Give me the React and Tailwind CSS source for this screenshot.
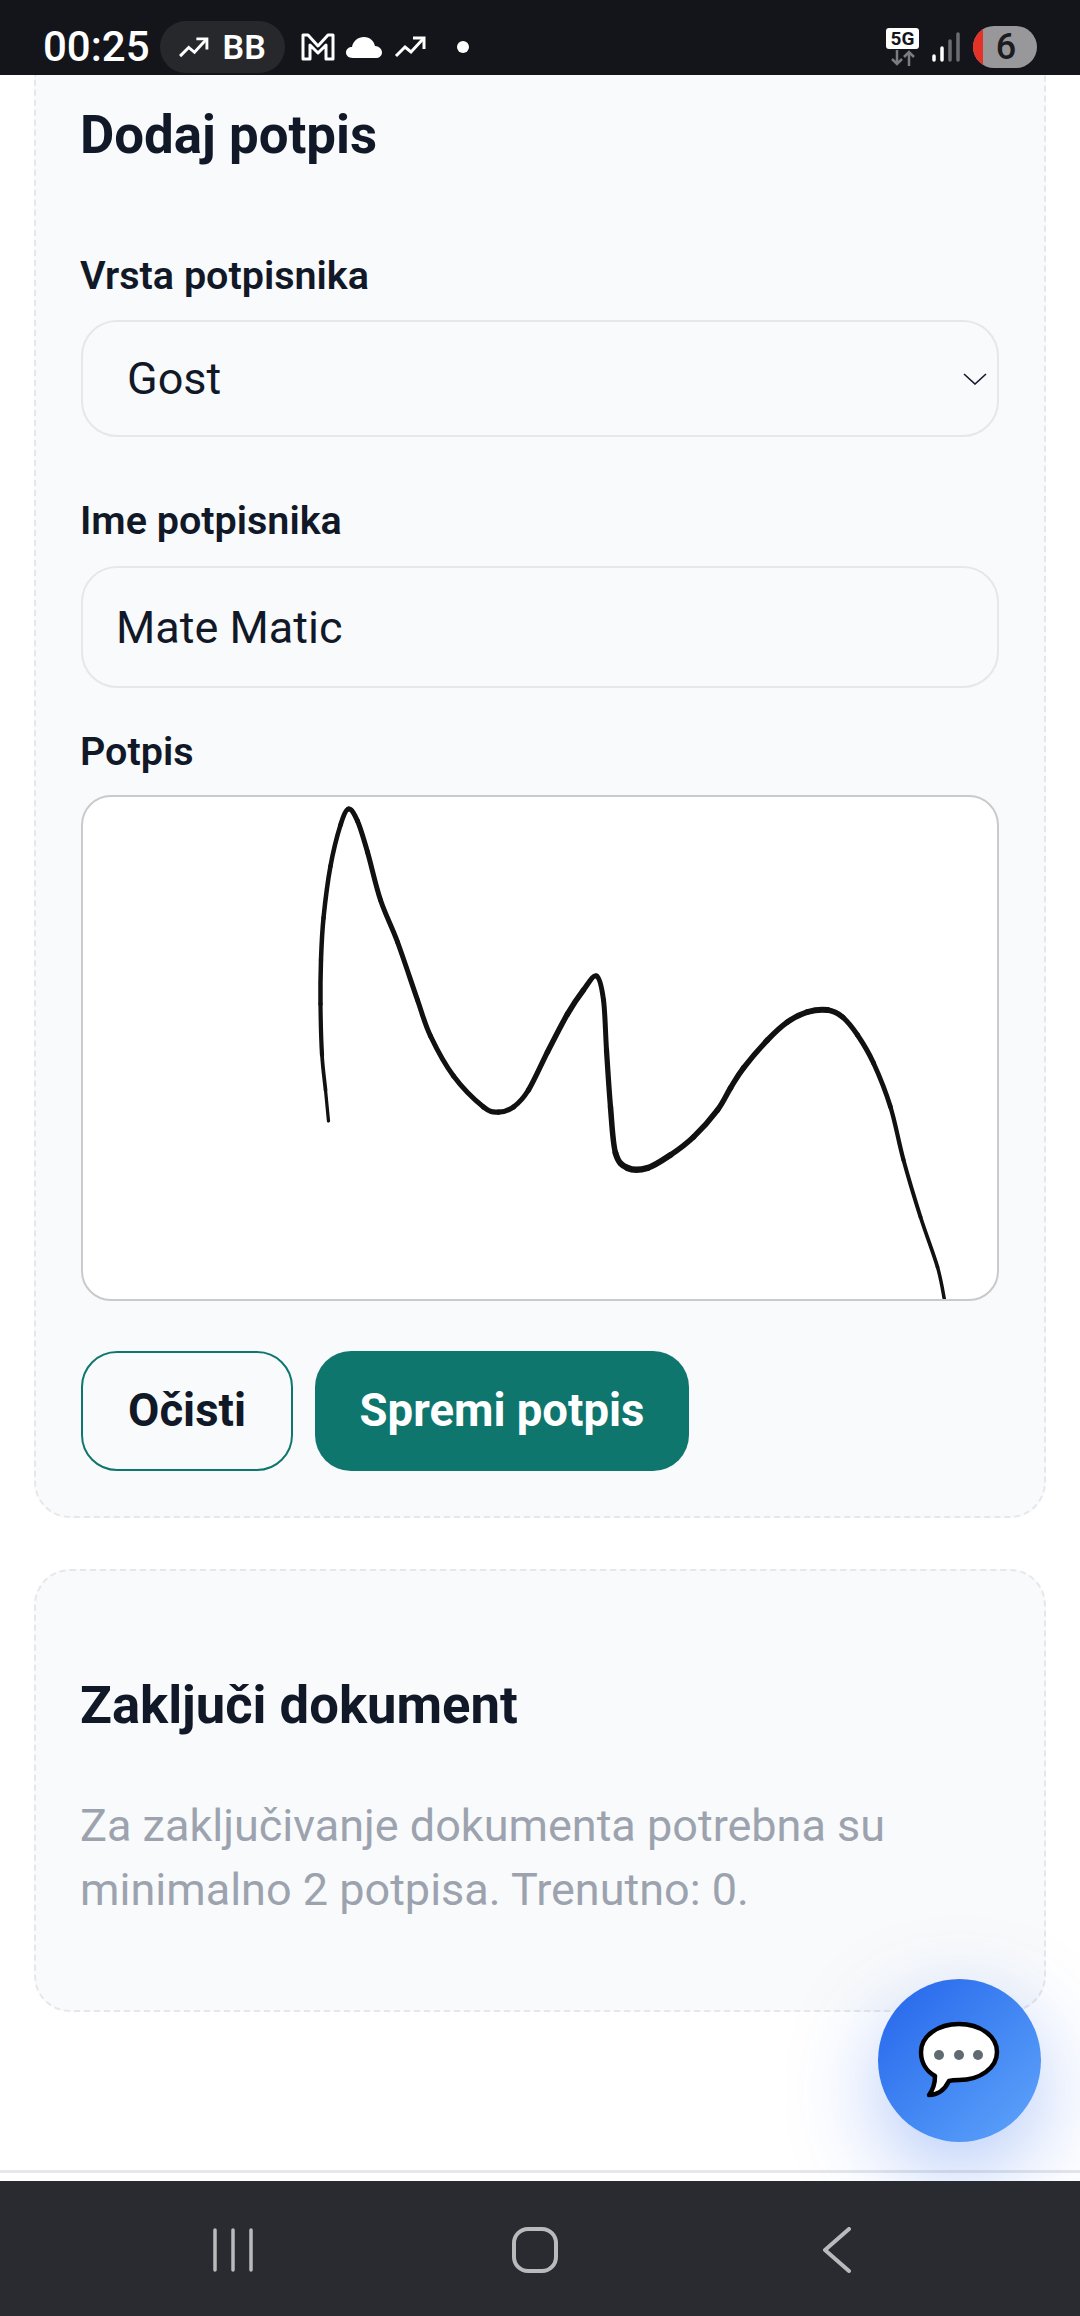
// Signature trace in page coordinates: x, y, stroke width
const SIGNATURE = [
  [328, 1121, 3], [325, 1090, 3.5], [321.5, 1055, 4], [320, 1004, 4.5], [320.5, 960, 4.5], [323, 918, 4.5],
  [330, 866, 4.5], [340, 825, 4.5], [348, 809, 5], [357, 821, 5], [367, 852, 5], [380, 900, 5],
  [397, 942, 5], [417, 1000, 5], [430, 1036, 5], [453, 1076, 5], [483, 1107, 5], [498, 1112, 5.5],
  [513, 1107, 5], [528, 1090, 5], [547, 1052, 5.5], [567, 1014, 5.5], [583, 990, 5.5], [596, 976, 5],
  [603, 1000, 5], [606, 1050, 5], [610, 1107, 5.5], [615, 1153, 5.5], [627, 1168, 6.5], [647, 1168, 6.5],
  [670, 1155, 5.5], [693, 1137, 5.5], [717, 1110, 5.5], [730, 1088, 5.5], [743, 1068, 5.5], [767, 1040, 5.5],
  [787, 1022, 5.5], [807, 1012, 6], [827, 1010, 6], [842, 1017, 5], [857, 1035, 5], [873, 1063, 5],
  [890, 1107, 4.5], [903, 1160, 4], [920, 1217, 4], [937, 1267, 3.5], [944, 1300, 3.5],
];

/**
 * Catmull-Rom segments of the trace, one path per segment so the pen width can vary.
 */
function signatureSegments() {
  return SIGNATURE.slice(0, -1).map((p1, i) => {
    const p0 = SIGNATURE[i - 1] || p1;
    const p2 = SIGNATURE[i + 1];
    const p3 = SIGNATURE[i + 2] || p2;
    const c1 = [p1[0] + (p2[0] - p0[0]) / 6, p1[1] + (p2[1] - p0[1]) / 6];
    const c2 = [p2[0] - (p3[0] - p1[0]) / 6, p2[1] - (p3[1] - p1[1]) / 6];
    return {
      d: `M${p1[0]} ${p1[1]}C${c1[0]} ${c1[1]} ${c2[0]} ${c2[1]} ${p2[0]} ${p2[1]}`,
      width: (p1[2] + p2[2]) / 2,
    };
  });
}

function TrendIcon({ className }) {
  return (
    <svg viewBox="0 0 32 24" className={className} fill="none" stroke="currentColor" strokeWidth="3">
      <path d="M2 21 L11 12 L17 17 L29 4" strokeLinejoin="miter" />
      <path d="M19 3 H30 V14" />
    </svg>
  );
}

function StatusBar() {
  return (
    <div className="h-[75px] shrink-0 bg-[#14151a] flex items-center pl-[43px] pt-[19px] text-white">
      <span className="text-[42px] leading-none font-medium">00:25</span>
      <div className="ml-[10px] h-[52px] w-[125px] rounded-full bg-[#27282c] flex items-center pl-[18px] gap-[14px]">
        <TrendIcon className="w-[31px] h-[23px]" />
        <span className="text-[34px] leading-none font-semibold">BB</span>
      </div>
      <svg viewBox="0 0 34 28" className="ml-[16px] w-[34px] h-[28px]" fill="none" stroke="currentColor" strokeWidth="3" strokeLinejoin="round">
        <path d="M2 2 H7 L17 13 L27 2 H32 V26 H25 V12 L17 20 L9 12 V26 H2 Z" />
      </svg>
      <svg viewBox="0 0 36 22" className="ml-[11px] w-[36px] h-[22px]" fill="currentColor">
        <path d="M7 22 C2 22 0 19 0 16.5 C0 13 3 11 6 11 C7 5 12 1 18 1 C24 1 28 5 29 10 C33 10 36 13 36 16.5 C36 20 33 22 30 22 Z" />
      </svg>
      <TrendIcon className="ml-[12px] w-[32px] h-[24px]" />
      <span className="ml-[31px] h-[12px] w-[12px] rounded-full bg-white" />
      <div className="ml-auto mr-[43px] flex items-center">
        <div className="flex flex-col items-center w-[33px]">
          <span className="w-[33px] h-[21px] rounded-[3px] bg-white text-[#14151a] text-[19px] leading-[21px] font-bold text-center">5G</span>
          <svg viewBox="0 0 26 16" className="w-[26px] h-[16px] mt-[1px]" fill="none" stroke="#7b7c80" strokeWidth="2.5">
            <path d="M7 0 V14 M2 9 L7 14 L12 9 M19 16 V2 M14 7 L19 2 L24 7" />
          </svg>
        </div>
        <svg viewBox="0 0 28 30" className="ml-[13px] w-[28px] h-[30px]" fill="none" strokeWidth="3.5" strokeLinecap="round">
          <path d="M2 28 V24" stroke="#ffffff" />
          <path d="M10 28 V16" stroke="#ffffff" />
          <path d="M18 28 V9" stroke="#6b6c70" />
          <path d="M26 28 V2" stroke="#6b6c70" />
        </svg>
        <div className="relative ml-[13px] h-[42px] w-[64px] rounded-full bg-[#98989b] overflow-hidden flex items-center justify-center">
          <span className="absolute left-0 inset-y-0 w-[10px] bg-[#e53229]" />
          <span className="pl-[2px] text-[36px] leading-none font-medium text-[#1b1c20]">6</span>
        </div>
      </div>
    </div>
  );
}

function FieldLabel({ children }) {
  return <div className="h-[54px] -ml-[1px] text-[39.5px] leading-[56px] font-semibold text-[#111827]">{children}</div>;
}

function AddSignatureCard() {
  return (
    <section className="mx-[34px] border-2 border-t-0 border-dashed border-[#e5e7eb] rounded-b-[36px] bg-[#f9fafb] px-[45px] pt-[24px] pb-[45px]">
      <h2 className="-ml-[1px] text-[52.8px] leading-[72px] font-bold text-[#111827]">Dodaj potpis</h2>

      <div className="mt-[77px]">
        <FieldLabel>Vrsta potpisnika</FieldLabel>
        <div className="relative mt-[18px] h-[117px] rounded-[36px] border-2 border-[#e5e7eb] flex items-center pl-[44px] text-[45px] text-[#111827]">
          Gost
          <svg viewBox="0 0 24 12" className="absolute right-[10px] top-1/2 -translate-y-1/2 w-[24px] h-[12px]" fill="none" stroke="#111827" strokeWidth="1.6">
            <path d="M1 1 L12 11 L23 1" />
          </svg>
        </div>
      </div>

      <div className="mt-[56px]">
        <FieldLabel>Ime potpisnika</FieldLabel>
        <div className="mt-[19px] h-[122px] rounded-[36px] border-2 border-[#e5e7eb] flex items-center pl-[33px] pt-[2px] text-[45px] text-[#111827]">
          Mate Matic
        </div>
      </div>

      <div className="mt-[36px]">
        <FieldLabel>Potpis</FieldLabel>
        <div className="mt-[17px] h-[506px] rounded-[30px] border-2 border-[#c9cacd] bg-white overflow-hidden">
          <svg viewBox="83 797 913 502" className="block w-full h-full" fill="none" stroke="#111111" strokeLinecap="round">
            {signatureSegments().map((segment, i) => (
              <path key={i} d={segment.d} strokeWidth={segment.width} />
            ))}
          </svg>
        </div>
      </div>

      <div className="mt-[50px] flex gap-[22px]">
        <button type="button" className="h-[120px] w-[212px] rounded-[36px] border-2 border-[#0f766e] text-[45.5px] font-bold text-[#111827]">
          Očisti
        </button>
        <button type="button" className="h-[120px] w-[374px] rounded-[36px] bg-[#0f766e] text-[45.5px] font-bold text-white">
          Spremi potpis
        </button>
      </div>
    </section>
  );
}

function FinishCard() {
  return (
    <section className="mx-[34px] mt-[51px] h-[443px] border-2 border-dashed border-[#e5e7eb] rounded-[36px] bg-[#f9fafb] px-[45px] pt-[98px]">
      <h2 className="-ml-[1px] text-[52.6px] leading-[72px] font-bold text-[#111827]">Zaključi dokument</h2>
      <p className="-ml-[1px] mt-[53px] text-[45px] leading-[64px] text-[#9ca3af]">
        Za zaključivanje dokumenta potrebna su minimalno 2 potpisa. Trenutno: 0.
      </p>
    </section>
  );
}

function ChatButton() {
  return (
    <button
      type="button"
      aria-label="Chat"
      className="absolute right-[39px] bottom-[174px] h-[163px] w-[163px] rounded-full bg-gradient-to-br from-[#2563eb] to-[#60a5fa] shadow-[0_30px_90px_rgba(37,99,235,0.35)] flex items-center justify-center"
    >
      <svg viewBox="0 0 82 77" className="w-[82px] h-[77px] -mt-[2px] -ml-[2px]">
        <path
          d="M41 3 C62 3 79 15 79 31 C79 47 62 59 41 59 C37 59 34 59 31 60 C27 68 20 74 11 74 C14 70 17 64 17 55 C8 50 3 41 3 31 C3 15 20 3 41 3 Z"
          fill="#ffffff"
          stroke="#000000"
          strokeWidth="4.5"
          strokeLinejoin="round"
        />
        <circle cx="21" cy="34" r="5" fill="#5f6b70" />
        <circle cx="41" cy="34" r="5" fill="#5f6b70" />
        <circle cx="60" cy="34" r="5" fill="#5f6b70" />
      </svg>
    </button>
  );
}

function NavBar() {
  return (
    <div className="relative z-10 h-[135px] shrink-0 bg-[#2a2b30] text-[#b9babc] grid grid-cols-[302px_302px_302px] justify-center items-center pr-[10px] pt-[3px]">
      <svg viewBox="0 0 40 44" className="justify-self-center w-[40px] h-[44px]" fill="none" stroke="currentColor" strokeWidth="3.5" strokeLinecap="round">
        <path d="M2 2 V42 M20 2 V42 M38 2 V42" />
      </svg>
      <svg viewBox="0 0 46 46" className="justify-self-center w-[46px] h-[46px]" fill="none" stroke="currentColor" strokeWidth="4">
        <rect x="2" y="2" width="42" height="42" rx="14" />
      </svg>
      <svg viewBox="0 0 30 46" className="justify-self-center w-[30px] h-[46px]" fill="none" stroke="currentColor" strokeWidth="4" strokeLinecap="round" strokeLinejoin="round">
        <path d="M27 2 L3 23 L27 44" />
      </svg>
    </div>
  );
}

export default function App() {
  return (
    <div className="relative h-[2316px] w-[1080px] overflow-hidden bg-white flex flex-col font-['Roboto',sans-serif]">
      <StatusBar />
      <main className="flex-1 flex flex-col min-h-0">
        <AddSignatureCard />
        <FinishCard />
        <div className="mt-auto h-[11px] border-t-[3px] border-[#e5e7eb]" />
      </main>
      <ChatButton />
      <NavBar />
    </div>
  );
}
